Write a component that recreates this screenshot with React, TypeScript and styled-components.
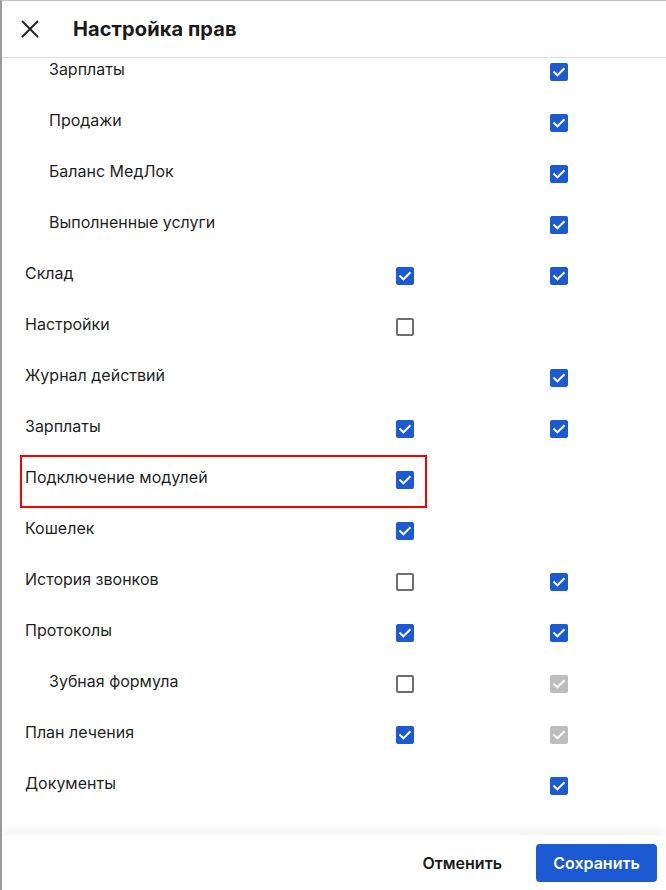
import React from 'react'
import styled, { createGlobalStyle } from 'styled-components'

type Mark = 'on' | 'off' | 'locked' | null

interface PermissionRow {
    label: string
    nested?: boolean
    view: Mark
    edit: Mark
    highlighted?: boolean
}

const rows: PermissionRow[] = [
    { label: 'Зарплаты', nested: true, view: null, edit: 'on' },
    { label: 'Продажи', nested: true, view: null, edit: 'on' },
    { label: 'Баланс МедЛок', nested: true, view: null, edit: 'on' },
    { label: 'Выполненные услуги', nested: true, view: null, edit: 'on' },
    { label: 'Склад', view: 'on', edit: 'on' },
    { label: 'Настройки', view: 'off', edit: null },
    { label: 'Журнал действий', view: null, edit: 'on' },
    { label: 'Зарплаты', view: 'on', edit: 'on' },
    { label: 'Подключение модулей', view: 'on', edit: null, highlighted: true },
    { label: 'Кошелек', view: 'on', edit: null },
    { label: 'История звонков', view: 'off', edit: 'on' },
    { label: 'Протоколы', view: 'on', edit: 'on' },
    { label: 'Зубная формула', nested: true, view: 'off', edit: 'locked' },
    { label: 'План лечения', view: 'on', edit: 'locked' },
    { label: 'Документы', view: null, edit: 'on' },
]

const Checkbox: React.FC<{ state: Mark }> = ({ state }) => {
    if (!state) return null
    return (
        <Box $state={state}>
            {state !== 'off' && (
                <svg width="18" height="18" viewBox="0 0 18 18">
                    <polyline
                        points="4.2,9.2 7.4,12.3 13.8,5.9"
                        fill="none"
                        stroke="#fff"
                        strokeWidth="2"
                        strokeLinecap="square"
                    />
                </svg>
            )}
        </Box>
    )
}

export default function App() {
    return (
        <>
            <GlobalStyle />
            <Dialog>
                <Header>
                    <CloseButton aria-label="Закрыть">
                        <svg width="18" height="18" viewBox="0 0 18 18">
                            <path
                                d="M1 1 L17 17 M17 1 L1 17"
                                stroke="#1f1f1f"
                                strokeWidth="1.8"
                                fill="none"
                            />
                        </svg>
                    </CloseButton>
                    <Title>Настройка прав</Title>
                </Header>

                <Body>
                    <List>
                        {rows.map((row, i) => (
                            <Row key={i} $highlighted={row.highlighted}>
                                <Label $nested={row.nested}>{row.label}</Label>
                                <Cell>
                                    <Checkbox state={row.view} />
                                </Cell>
                                <Cell>
                                    <Checkbox state={row.edit} />
                                </Cell>
                            </Row>
                        ))}
                    </List>
                </Body>

                <Footer>
                    <GhostButton>Отменить</GhostButton>
                    <PrimaryButton>Сохранить</PrimaryButton>
                </Footer>
            </Dialog>
        </>
    )
}

const GlobalStyle = createGlobalStyle`
    html, body {
        margin: 0;
        padding: 0;
        background: #fff;
    }
    body {
        font-family: Inter, "Noto Sans", sans-serif;
        color: #1f1f1f;
    }
`

const Dialog = styled.div`
    width: 666px;
    height: 890px;
    box-sizing: border-box;
    border-top: 1px solid #c2c2c2;
    border-left: 2px solid #9a9a9a;
    display: flex;
    flex-direction: column;
    background: #fff;
    overflow: hidden;
`

const Header = styled.div`
    flex: none;
    height: 56px;
    display: flex;
    align-items: center;
    column-gap: 33px;
    padding-left: 18px;
    border-bottom: 1px solid #dedede;
`

const CloseButton = styled.button`
    width: 20px;
    height: 20px;
    padding: 0;
    margin: 0;
    border: none;
    background: transparent;
    display: flex;
    align-items: center;
    justify-content: center;
`

const Title = styled.h1`
    margin: 0;
    font-size: 20px;
    font-weight: 700;
    color: #1a1a1a;
    letter-spacing: 0.1px;
`

const Body = styled.div`
    flex: 1;
    overflow: hidden;
`

const List = styled.div`
    margin-top: -12px;
    display: flex;
    flex-direction: column;
`

const Row = styled.div<{ $highlighted?: boolean }>`
    position: relative;
    height: 51px;
    display: grid;
    grid-template-columns: 371px 154px 1fr;
    align-items: center;
    padding-left: 23px;

    ${(p) =>
        p.$highlighted &&
        `
        &::after {
            content: '';
            position: absolute;
            left: 18px;
            top: 1px;
            width: 407px;
            height: 53px;
            box-sizing: border-box;
            border: 2px solid #ff0000;
            pointer-events: none;
        }
    `}
`

const Label = styled.span<{ $nested?: boolean }>`
    font-size: 16px;
    line-height: 20px;
    padding-left: ${(p) => (p.$nested ? '24px' : '0')};
    margin-bottom: 5px;
    color: #1f1f1f;
`

const Cell = styled.div`
    display: flex;
    align-items: center;
    height: 18px;
`

const Box = styled.span<{ $state: Mark }>`
    width: 18px;
    height: 18px;
    box-sizing: border-box;
    border-radius: 2px;
    display: block;
    background: ${(p) =>
        p.$state === 'on' ? '#1b5ad2' : p.$state === 'locked' ? '#bdbdbd' : '#fff'};
    border: ${(p) => (p.$state === 'off' ? '2px solid #6f6f6f' : 'none')};

    svg {
        display: block;
    }
`

const Footer = styled.div`
    flex: none;
    height: 55px;
    display: flex;
    align-items: center;
    justify-content: flex-end;
    column-gap: 18px;
    padding-right: 9px;
    box-shadow: 0 -4px 12px rgba(0, 0, 0, 0.06);
    position: relative;
`

const GhostButton = styled.button`
    height: 38px;
    padding: 0 16px;
    border: none;
    background: transparent;
    font-family: Inter, "Noto Sans", sans-serif;
    font-size: 16px;
    font-weight: 600;
    color: #1a1a1a;
`

const PrimaryButton = styled.button`
    height: 38px;
    width: 121px;
    border: none;
    border-radius: 4px;
    background: #1b5ad2;
    font-family: Inter, "Noto Sans", sans-serif;
    font-size: 16px;
    font-weight: 600;
    color: #fff;
`
